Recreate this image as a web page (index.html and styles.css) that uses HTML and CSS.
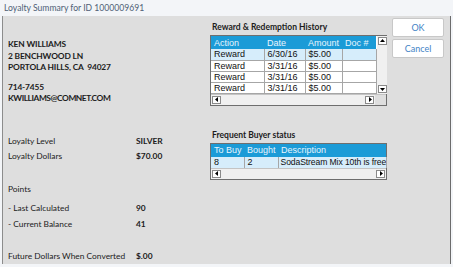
FILE: index.html
```html
<!DOCTYPE html>
<html lang="en">

<head>
    <meta charset="UTF-8">
    <title>Loyalty Summary</title>
    <link rel="stylesheet" href="styles.css">
</head>

<body>
    <div class="window">
        <div class="titlebar">Loyalty Summary for ID 1000009691</div>
        <div class="main">
            <div class="info">
                <div class="address">
                    <p>KEN WILLIAMS</p>
                    <p>2 BENCHWOOD LN</p>
                    <p>PORTOLA HILLS, CA&nbsp; 94027</p>
                </div>
                <div class="contact">
                    <p>714-7455</p>
                    <p class="email">KWILLIAMS@COMNET.COM</p>
                </div>
                <div class="pairs level">
                    <span>Loyalty Level</span><b>SILVER</b>
                    <span>Loyalty Dollars</span><b>$70.00</b>
                </div>
                <div class="points">Points</div>
                <div class="pairs balance">
                    <span>- Last Calculated</span><b>90</b>
                    <span>- Current Balance</span><b>41</b>
                </div>
                <div class="pairs future">
                    <span>Future Dollars When Converted</span><b>$.00</b>
                </div>
            </div>

            <div class="lists">
                <div class="caption">Reward &amp; Redemption History</div>
                <div class="grid">
                    <div class="grid_body">
                        <table class="history">
                            <colgroup>
                                <col style="width:53px">
                                <col style="width:41px">
                                <col style="width:37px">
                                <col style="width:34px">
                            </colgroup>
                            <tr>
                                <th>Action</th>
                                <th>Date</th>
                                <th>Amount</th>
                                <th>Doc #</th>
                            </tr>
                            <tr class="sel">
                                <td>Reward</td>
                                <td>6/30/16</td>
                                <td>$5.00</td>
                                <td></td>
                            </tr>
                            <tr>
                                <td>Reward</td>
                                <td>3/31/16</td>
                                <td>$5.00</td>
                                <td></td>
                            </tr>
                            <tr>
                                <td>Reward</td>
                                <td>3/31/16</td>
                                <td>$5.00</td>
                                <td></td>
                            </tr>
                            <tr>
                                <td>Reward</td>
                                <td>3/31/16</td>
                                <td>$5.00</td>
                                <td></td>
                            </tr>
                        </table>
                        <div class="vscroll">
                            <span class="arrow"><svg width="5" height="4" viewBox="0 0 5 4"><polygon points="0,3 5,3 2.5,0" /></svg></span>
                            <span class="arrow"><svg width="5" height="4" viewBox="0 0 5 4"><polygon points="0,1 5,1 2.5,4" /></svg></span>
                        </div>
                    </div>
                    <div class="hscroll">
                        <div class="track">
                            <span class="arrow"><svg width="4" height="5" viewBox="0 0 4 5"><polygon points="3,0 3,5 0,2.5" /></svg></span>
                            <span class="arrow"><svg width="4" height="5" viewBox="0 0 4 5"><polygon points="1,0 1,5 4,2.5" /></svg></span>
                        </div>
                        <div class="corner"></div>
                    </div>
                </div>

                <div class="caption second">Frequent Buyer status</div>
                <div class="grid">
                    <table class="buyer">
                        <colgroup>
                            <col style="width:33px">
                            <col style="width:34px">
                            <col style="width:108px">
                        </colgroup>
                        <tr>
                            <th>To Buy</th>
                            <th>Bought</th>
                            <th>Description</th>
                        </tr>
                        <tr class="sel">
                            <td>8</td>
                            <td>2</td>
                            <td>SodaStream Mix 10th is free</td>
                        </tr>
                    </table>
                    <div class="hscroll">
                        <div class="track">
                            <span class="arrow"><svg width="4" height="5" viewBox="0 0 4 5"><polygon points="3,0 3,5 0,2.5" /></svg></span>
                            <span class="arrow"><svg width="4" height="5" viewBox="0 0 4 5"><polygon points="1,0 1,5 4,2.5" /></svg></span>
                        </div>
                    </div>
                </div>
            </div>

            <div class="actions">
                <button class="btn">OK</button>
                <button class="btn">Cancel</button>
            </div>
        </div>
    </div>
</body>

</html>
```

FILE: styles.css
```css
* {
    padding: 0;
    margin: 0;
    box-sizing: border-box;
}

body {
    width: 453px;
    height: 267px;
    overflow: hidden;
    background-color: #f6f6f6;
    font-family: Lato, "Open Sans", sans-serif;
}

.window {
    display: flex;
    flex-direction: column;
    height: 267px;
    padding: 0 2px 4px 2px;
    background-color: #f3f5f8;
}

.titlebar {
    height: 17px;
    line-height: 16px;
    padding-left: 2px;
    font-size: 8.6px;
    color: #4f5f76;
}

.main {
    flex: 1;
    display: flex;
    background-color: #dedede;
    border-left: 1px solid #8c8c8c;
    border-right: 1px solid #6c6c6c;
}

/* left side */
.info {
    width: 207px;
    padding: 23px 0 0 5px;
    font-size: 8.4px;
    color: #1c1c1c;
}

.address,
.contact {
    font-weight: bold;
    line-height: 11.5px;
    letter-spacing: -0.15px;
}

.contact {
    margin-top: 8px;
}

.email {
    letter-spacing: -0.45px;
}

.pairs {
    display: grid;
    grid-template-columns: 128px 1fr;
    line-height: 15px;
}

.pairs b {
    font-weight: bold;
}

.level {
    margin-top: 29px;
}

.points {
    margin-top: 18px;
    line-height: 15px;
}

.balance {
    margin-top: 3px;
    line-height: 16px;
}

.future {
    margin-top: 16px;
    line-height: 16px;
}

/* tables */
.lists {
    width: 177px;
    display: flex;
    flex-direction: column;
    padding-top: 5px;
}

.caption {
    padding-left: 2px;
    margin-bottom: 2px;
    font-size: 8.5px;
    font-weight: bold;
    line-height: 12px;
    color: #1c1c1c;
}

.caption.second {
    margin-top: 23px;
}

.grid {
    border: 1px solid #6e6e6e;
    background-color: #fff;
}

.grid_body {
    display: flex;
}

table {
    border-collapse: collapse;
    table-layout: fixed;
    font-family: "Liberation Sans", Arial, sans-serif;
    font-size: 9px;
    color: #111;
}

.history {
    width: 165px;
}

.buyer {
    width: 175px;
}

th {
    height: 13px;
    padding-left: 3px;
    font-weight: normal;
    text-align: left;
    color: #e8f5fd;
    background-color: #1b9bd7;
}

td {
    height: 11px;
    padding-left: 3px;
    line-height: 10px;
    white-space: nowrap;
    overflow: hidden;
    border-bottom: 1px solid #a6a6a6;
    border-right: 1px solid #a6a6a6;
}

.sel td {
    background-color: #d6edfb;
}

.buyer td {
    border-bottom: 0;
}

.buyer td:last-child {
    padding-left: 2px;
    font-size: 8.6px;
    letter-spacing: -0.1px;
}

.vscroll {
    width: 10px;
    display: flex;
    flex-direction: column;
    justify-content: space-between;
    padding: 1px 0 1px 1px;
    background-color: #f0f0f0;
}

.hscroll {
    display: flex;
    height: 11px;
    background-color: #f0f0f0;
    border-top: 1px solid #c4c4c4;
}

.track {
    flex: 1;
    display: flex;
    justify-content: space-between;
    padding: 1px;
}

.corner {
    width: 11px;
    background-color: #dedede;
}

.arrow {
    display: flex;
    align-items: center;
    justify-content: center;
    width: 9px;
    height: 8px;
    background-color: #fff;
    border: 1px solid #8a8a8a;
}

.arrow polygon {
    fill: #000;
}

/* buttons */
.actions {
    display: flex;
    flex-direction: column;
    gap: 2px;
    margin-left: 5px;
    padding-top: 2px;
}

.btn {
    width: 52px;
    height: 19px;
    font-family: Lato, "Open Sans", sans-serif;
    font-size: 9px;
    color: #3f84c6;
    background-color: #fff;
    border: 1px solid #c8c8c8;
    border-radius: 2px;
}
```
